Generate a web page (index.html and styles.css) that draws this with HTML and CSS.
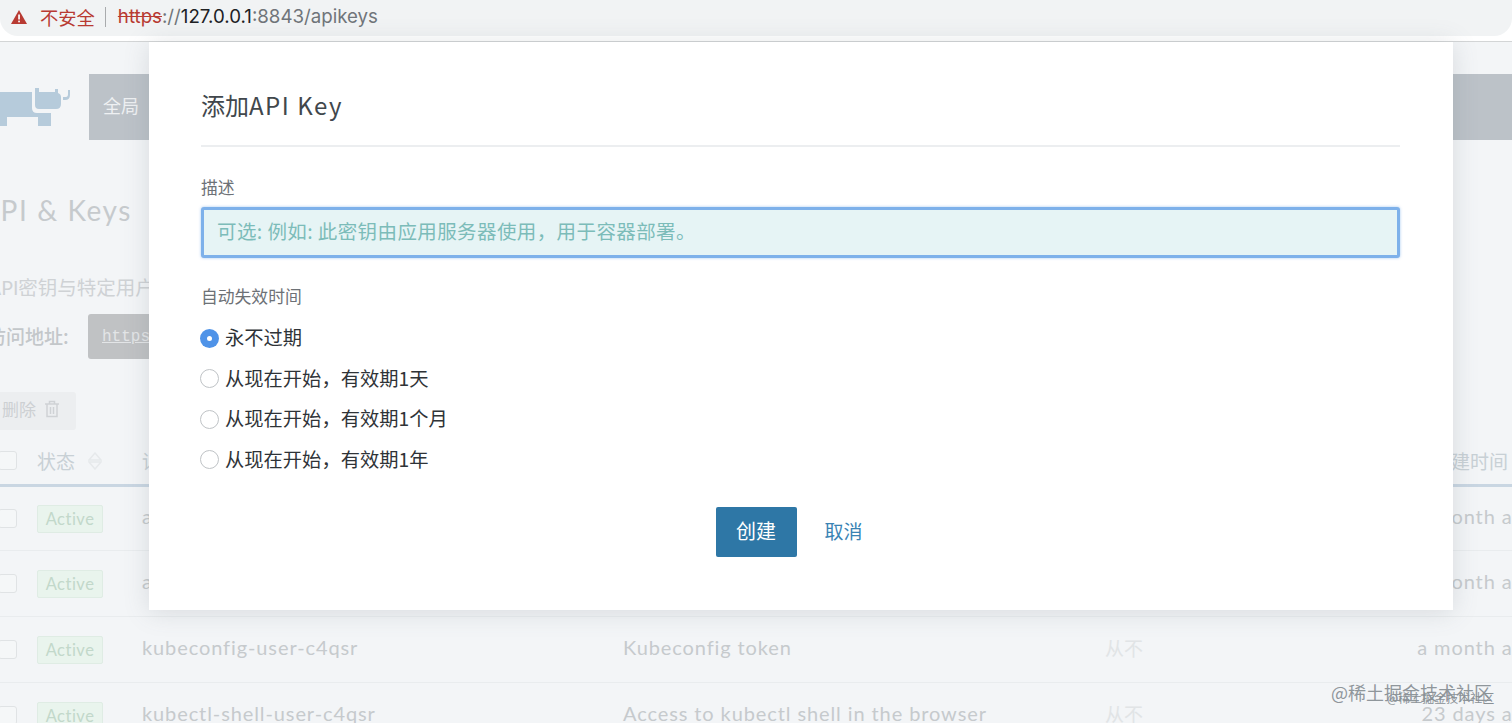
FILE: index.html
```html
<!DOCTYPE html>
<html lang="zh">
<head>
<meta charset="utf-8">
<title>API Keys</title>
<link rel="stylesheet" href="styles.css">
</head>
<body>
<div class="chrome">
  <div class="omnibox">
    <svg class="warn" width="18" height="16" viewBox="0 0 18 16"><path d="M9 1 17 15H1Z" fill="#b83a32"/><rect x="8.2" y="5.5" width="1.7" height="5" fill="#fff"/><rect x="8.2" y="11.6" width="1.7" height="1.7" fill="#fff"/></svg>
    <span class="insecure">不安全</span>
    <span class="sep"></span>
    <span class="url"><s class="scheme">https</s><span class="grey">://</span><span class="host">127.0.0.1</span><span class="grey">:8843/apikeys</span></span>
  </div>
</div>

<div class="page">
  <header class="topbar">
    <svg class="logo" width="76" height="40" viewBox="0 0 76 40"><path d="M0 4H32V20Q32 25 37 25H51V38H38V29H7V38H0Z" fill="#b6cbdb"/><path d="M35 0H39V4H55V1H58V5Q61 6 61 9V16Q61 21 56 21H39Q35 21 35 17Z" fill="#b6cbdb"/><path d="M63 9H66Q68 9 68 6V2H70V7Q70 12 65 12H63Z" fill="#b6cbdb"/></svg>
    <div class="cluster">全局</div>
  </header>

  <h1 class="pagetitle">API &amp; Keys</h1>
  <p class="intro">API密钥与特定用户</p>
  <div class="endpoint"><span class="endpoint-label">访问地址:</span><code class="endpoint-code"><u>https</u></code></div>

  <div class="actions">
    <button class="del">删除
      <svg width="16" height="18" viewBox="0 0 16 18"><path d="M1 4H15M5.500 4V1.500H10.500V4M3 4V16.500H13V4M6.500 7V14M9.500 7V14" fill="none" stroke="#cfd2d5" stroke-width="1.500"/></svg>
    </button>
  </div>

  <div class="grid-row head">
    <span class="box"></span>
    <span class="sortable">状态<svg width="14" height="18" viewBox="0 0 14 18"><path d="M7 1 13 8H1ZM7 17 1 10H13Z" fill="none" stroke="#e6e9eb" stroke-width="1.500"/></svg></span>
    <span>详</span><span></span><span></span>
    <span class="created">创建时间</span>
  </div>
  <div class="grid-row first"><span class="box"></span><span class="badge">Active</span><span class="txt">a</span><span></span><span></span><span class="txt created">a month ago</span></div>
  <div class="grid-row"><span class="box"></span><span class="badge">Active</span><span class="txt">a</span><span></span><span></span><span class="txt created">a month ago</span></div>
  <div class="grid-row"><span class="box"></span><span class="badge">Active</span><span class="txt">kubeconfig-user-c4qsr</span><span class="txt">Kubeconfig token</span><span class="txt never">从不</span><span class="txt created">a month ago</span></div>
  <div class="grid-row"><span class="box"></span><span class="badge">Active</span><span class="txt">kubectl-shell-user-c4qsr</span><span class="txt">Access to kubectl shell in the browser</span><span class="txt never">从不</span><span class="txt created">23 days ago</span></div>
</div>

<section class="modal">
  <h2 class="modal-title">添加<span class="latin">API Key</span></h2>
  <label class="field-label label-desc" for="desc">描述</label>
  <input class="desc-input" id="desc" type="text" placeholder="可选: 例如: 此密钥由应用服务器使用，用于容器部署。">
  <div class="field-label label-exp">自动失效时间</div>
  <div class="radios">
    <div class="radio-row"><span class="radio on"></span>永不过期</div>
    <div class="radio-row"><span class="radio"></span>从现在开始，有效期1天</div>
    <div class="radio-row"><span class="radio"></span>从现在开始，有效期1个月</div>
    <div class="radio-row"><span class="radio"></span>从现在开始，有效期1年</div>
  </div>
  <div class="modal-actions">
    <button class="btn-create">创建</button>
    <button class="btn-cancel">取消</button>
  </div>
</section>

<div class="mark mark-a">@稀土掘金技术社区</div>
<div class="mark mark-b">@稀土掘金技术社区</div>
</body>
</html>
```
FILE: styles.css
```css
* { box-sizing: border-box; }
html, body { margin: 0; height: 723px; overflow: hidden; }
body {
  width: 1512px;
  background: #f3f5f7;
  font-family: "Lato", "Noto Sans CJK SC", sans-serif;
  position: relative;
}
.chrome {
  height: 42px;
  background: #fff;
  border-bottom: 1px solid #d3d5d6;
}
.omnibox {
  height: 36px;
  padding: 0 0 3px 10px;
  background: #f1f3f4;
  border-radius: 0 0 18px 18px;
  display: flex;
  align-items: center;
  font-family: "Inter", "Noto Sans CJK SC", sans-serif;
  font-size: 18.700px;
}
.insecure { color: #b83a32; margin-left: 12px; font-size: 18.300px; }
.sep { width: 1px; height: 20px; background: #a9abad; margin: 0 12px 0 10px; }
.scheme { color: #b83a32; }
.grey { color: #70757a; }
.host { color: #202124; }

.page { overflow: hidden; }
.topbar { display: flex; height: 66px; margin-top: 32px; }
.logo { margin: 14px 13px 0 0; flex: none; }
.cluster {
  flex: 1;
  background: #bcc2c8;
  color: #eef0f2;
  font-size: 18px;
  padding-left: 14px;
  line-height: 64px;
}
.pagetitle {
  margin: 52px 0 0 -20px;
  font-size: 28px;
  line-height: 36px;
  font-weight: 400;
  letter-spacing: 1.600px;
  color: #c6cacd;
}
.intro {
  margin: 46px 0 0 -12px;
  font-size: 19.500px;
  line-height: 28px;
  color: #cfd2d5;
}
.endpoint { display: flex; align-items: center; height: 45px; margin: 12px 0 0 -13px; }
.endpoint-label {
  width: 101px;
  padding-bottom: 3px;
  font-family: "Noto Sans CJK SC", sans-serif;
  font-size: 19px;
  font-weight: 500;
  color: #c3c7ca;
}
.endpoint-code {
  width: 300px;
  height: 45px;
  line-height: 46px;
  padding-left: 14px;
  background: #c0c2c4;
  border-radius: 3px;
  font-family: "Liberation Mono", monospace;
  font-size: 16px;
  color: #e3e5e7;
}
.actions { margin-top: 33px; height: 38px; }
.del {
  height: 38px;
  width: 76px;
  padding: 0 0 5px 2px;
  border: 0;
  border-radius: 0 3px 3px 0;
  background: #eceef0;
  color: #cdd0d3;
  font: 17px "Noto Sans CJK SC", sans-serif;
  display: flex;
  align-items: center;
  gap: 8px;
}
.grid-row {
  display: grid;
  grid-template-columns: 39px 105px 481px 482px 100px 1fr;
  align-items: center;
  width: 1538px;
  height: 66px;
  margin-left: -2px;
  border-bottom: 1px solid #e9ecee;
  font-size: 20px;
  letter-spacing: .9px;
  color: #c6cacd;
}
.grid-row.first { height: 64px; }
.grid-row.head {
  margin-top: 10px;
  height: 47px;
  padding-bottom: 3px;
  border-bottom: 3px solid #c9d6e2;
  font-family: "Noto Sans CJK SC", sans-serif;
  font-size: 19px;
  letter-spacing: 0;
  color: #c8d0d5;
}
.txt { padding-bottom: 5px; }
.box {
  width: 19px;
  height: 19px;
  background: #f5f7f8;
  border: 1px solid #e0e3e5;
  border-radius: 3px;
}
.sortable { display: flex; align-items: center; gap: 13px; }
.badge {
  width: 66px;
  height: 28px;
  line-height: 26px;
  text-align: center;
  background: #e9f4ed;
  border: 1px solid #dfece4;
  border-radius: 2px;
  font-size: 16.500px;
  letter-spacing: .5px;
  color: #c2d8ca;
}
.never { color: #e1e4e6; font-family: "Noto Sans CJK SC", sans-serif; font-size: 19px; letter-spacing: 0; white-space: nowrap; }
.created { text-align: right; }
.head .created { padding-right: 28px; }

.modal {
  position: absolute;
  left: 149px;
  top: 42px;
  width: 1304px;
  height: 568px;
  padding: 0 53px 0 52px;
  background: #fff;
  box-shadow: 0 2px 24px rgba(90, 100, 110, .18);
  font-family: "Noto Sans CJK SC", sans-serif;
}
.modal-title {
  margin: 0;
  height: 105px;
  padding-top: 43px;
  border-bottom: 2px solid #eceef0;
  font-size: 24px;
  line-height: 40px;
  font-weight: 400;
  color: #41474c;
}
.latin { letter-spacing: 1.500px; }
.field-label { display: block; font-size: 16.800px; line-height: 22px; color: #6d7176; }
.label-desc { margin-top: 29px; }
.desc-input {
  display: block;
  width: 100%;
  height: 51px;
  margin-top: 9px;
  padding: 0 13px 4px;
  background: #e6f4f5;
  border: 3px solid #7eb1ea;
  border-radius: 3px;
  box-shadow: 0 0 3px rgba(126, 177, 234, .7);
  outline: 0;
  letter-spacing: .4px;
  font: 19.500px "Noto Sans CJK SC", sans-serif;
}
.desc-input::placeholder { color: #7cbcb9; opacity: 1; }
.label-exp { margin-top: 27px; }
.radios { margin-top: 11px; }
.radio-row {
  display: flex;
  align-items: center;
  gap: 6px;
  height: 40.500px;
  padding-bottom: 2px;
  margin-left: -1px;
  font-size: 19.300px;
  color: #2f3337;
}
.radio {
  width: 19px;
  height: 19px;
  margin-top: 2px;
  flex: none;
  background: #fff;
  border: 1px solid #bfc3c6;
  border-radius: 50%;
}
.radio.on { background: #4f93e8; border: 0; position: relative; }
.radio.on::after {
  content: "";
  position: absolute;
  left: 7px;
  top: 7px;
  width: 5px;
  height: 5px;
  border-radius: 50%;
  background: #fff;
}
.modal-actions { display: flex; justify-content: center; gap: 28px; margin-top: 27px; padding-right: 23px; }
.btn-create {
  width: 81px;
  height: 50px;
  padding: 0 0 4px;
  border: 0;
  border-radius: 2px;
  background: #2e77a6;
  color: #fff;
  font: 20px "Noto Sans CJK SC", sans-serif;
}
.btn-cancel {
  width: 38px;
  padding: 0 0 4px;
  border: 0;
  background: none;
  color: #3a83b4;
  font: 19px "Noto Sans CJK SC", sans-serif;
  white-space: nowrap;
}
.mark {
  position: absolute;
  font-family: "Noto Sans CJK SC", sans-serif;
  white-space: nowrap;
}
.mark-a { left: 1331px; top: 679px; font-size: 18px; line-height: 26px; color: #8f969b; }
.mark-b { left: 1387px; top: 690px; font-size: 12px; line-height: 16px; color: #8a9196; }
```
